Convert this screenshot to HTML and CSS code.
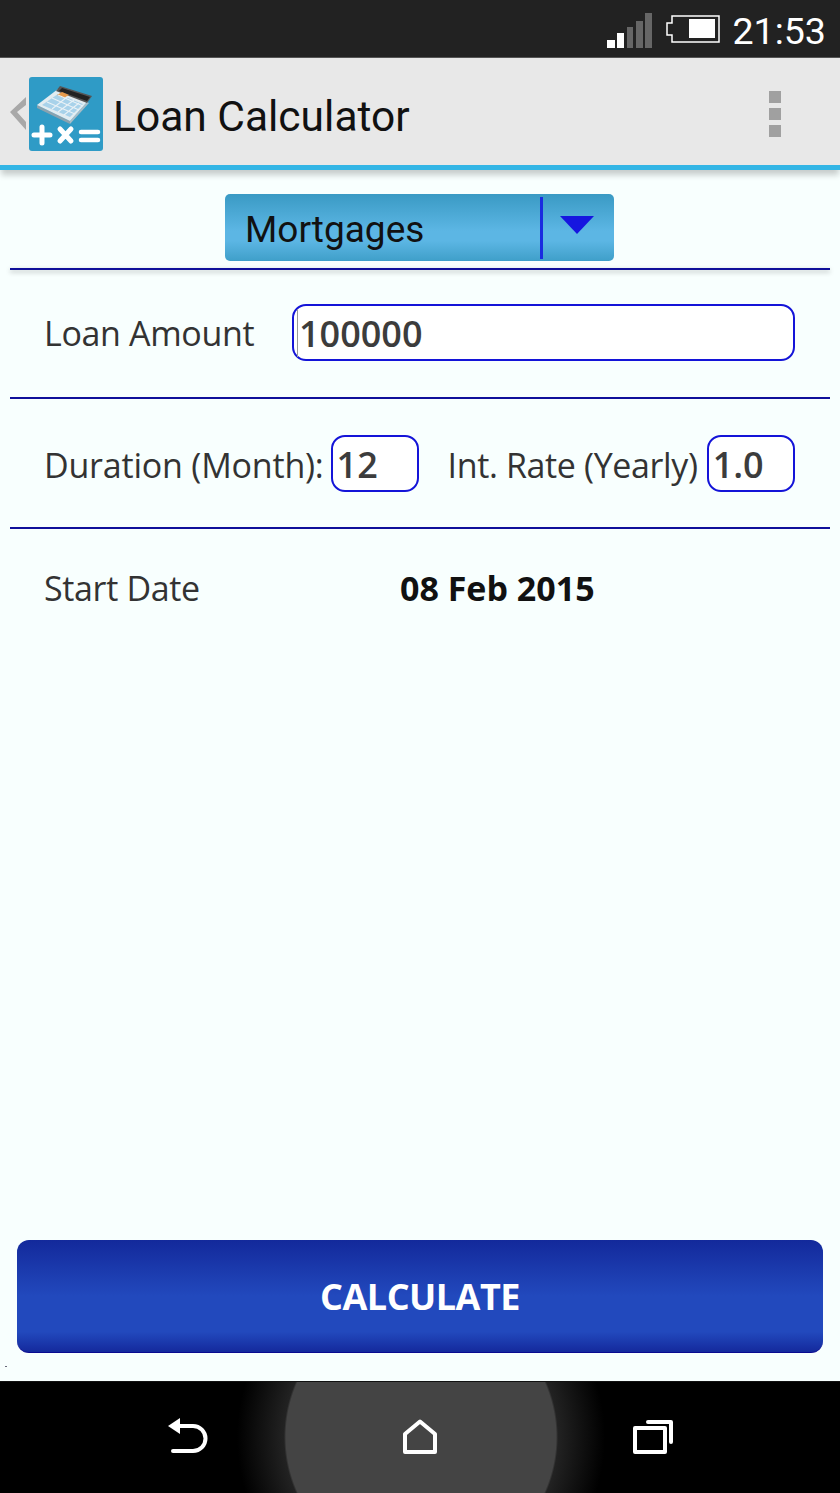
FILE: index.html
```html
<!DOCTYPE html>
<html lang="en">
<head>
  <meta charset="UTF-8">
  <meta name="viewport" content="width=device-width, initial-scale=1.0">
  <link rel="stylesheet" href="styles.css">
  <title>Loan Calculator</title>
</head>
<body>

  <div class="status-bar">
    <svg class="signal" width="46" height="36" viewBox="0 0 46 36">
      <rect x="1" y="28" width="8" height="8" fill="#fff"/>
      <rect x="11" y="21" width="7" height="15" fill="#fff"/>
      <rect x="21" y="15" width="6" height="21" fill="#666"/>
      <rect x="30" y="9" width="7" height="27" fill="#666"/>
      <rect x="39" y="1" width="7" height="35" fill="#666"/>
    </svg>
    <svg class="battery" width="54" height="30" viewBox="0 0 54 30">
      <path d="M6 9V2h47v26H6v-7H1V9z" fill="none" stroke="#fff" stroke-width="1.5"/>
      <rect x="23" y="5" width="26" height="19" fill="#fff"/>
    </svg>
    <span class="clock">21:53</span>
  </div>

  <header class="action-bar">
    <svg class="back" width="16" height="33" viewBox="0 0 16 33">
      <path d="M16 0L0 15 16 33V25L7 15 16 8z" fill="#a8a8a8"/>
    </svg>
    <svg class="app-icon" width="74" height="74" viewBox="0 0 74 74">
      <rect width="74" height="74" rx="3" fill="#2f9bc6"/>
      <path d="M8 28L41 44 41 47 8 31z" fill="#8aa2af"/>
      <path d="M41 44L58 25 60 26 41 47z" fill="#a7bcc7"/>
      <path d="M8 28L29 12 58 25 41 44z" fill="#e2ecf1"/>
      <path d="M31 9L63 19 58 26 27 14z" fill="#555"/>
      <path d="M33 11L61 20 58 24 30 14z" fill="#222"/>
      <path d="M13 28L29 17 54 27 41 40z" fill="#a8d2ea"/>
      <path d="M28 18L33 15 40 18 35 21z" fill="#e69a4c"/>
      <path d="M18 25L46 37M23 21L50 33M29 18L54 29M23 32L38 20M29 35L45 23M35 38L50 26" stroke="#e8f1f6" stroke-width="1.1" fill="none"/>
      <path d="M5 58H21M13 50V66" stroke="#fff" stroke-width="5" stroke-linecap="round" fill="none"/>
      <path d="M31 52L42 64M42 52L31 64" stroke="#fff" stroke-width="5" stroke-linecap="round" fill="none"/>
      <path d="M52 55H69M52 63H69" stroke="#fff" stroke-width="4.5" stroke-linecap="round" fill="none"/>
    </svg>
    <h1 class="title">Loan Calculator</h1>
    <div class="overflow">
      <span></span><span></span><span></span>
    </div>
  </header>

  <main class="content">
    <div class="spinner-row">
      <div class="spinner">
        <span class="spinner-label">Mortgages</span>
        <span class="spinner-arrow"></span>
      </div>
    </div>
    <hr class="divider divider-shadow">

    <div class="row row-amount">
      <label class="field-label amount-label">Loan Amount</label>
      <div class="input input-wide"><span class="caret"></span>100000</div>
    </div>
    <hr class="divider">

    <div class="row row-terms">
      <label class="field-label">Duration (Month):</label>
      <div class="input input-small">12</div>
      <label class="field-label rate-label">Int. Rate (Yearly)</label>
      <div class="input input-small">1.0</div>
    </div>
    <hr class="divider">

    <div class="row row-date">
      <label class="field-label date-label">Start Date</label>
      <strong class="date-value">08 Feb 2015</strong>
    </div>

    <button class="calc-btn">CALCULATE</button>
    <span class="speck"></span>
  </main>

  <nav class="nav-bar">
    <svg width="42" height="40" viewBox="0 0 42 40" fill="none" stroke="#fff" stroke-width="4" stroke-linecap="round">
      <path d="M14 9H27A12.5 12.5 0 0 1 27 34H7"/>
      <path d="M2 9L14 1V17z" fill="#fff" stroke="none"/>
    </svg>
    <svg width="36" height="40" viewBox="0 0 36 40" fill="none" stroke="#fff" stroke-width="4" stroke-linejoin="round">
      <path d="M18 4.5L33 17V35H3V17z"/>
    </svg>
    <svg width="42" height="40" viewBox="0 0 42 40" fill="none" stroke="#fff" stroke-width="4" stroke-linejoin="round" stroke-linecap="round">
      <rect x="3" y="11" width="30" height="24"/>
      <path d="M16 5H39V25"/>
    </svg>
  </nav>

</body>
</html>
```

FILE: styles.css
```css
body {
  font-family: "Open Sans", Arial, sans-serif;
  margin: 0;
  padding: 0;
  width: 840px;
  height: 1493px;
  display: flex;
  flex-direction: column;
  overflow: hidden;
  background: #f8fffe;
}

.status-bar {
  height: 57px;
  flex: none;
  background: #222;
  border-bottom: 1px solid #555;
  display: flex;
  align-items: center;
  justify-content: flex-end;
  padding-right: 14px;
  color: #fff;
}

.signal {
  margin-right: 14px;
  margin-top: 2px;
}

.battery {
  margin-right: 12px;
}

.clock {
  font-family: Roboto, sans-serif;
  font-size: 37.6px;
  margin-top: 5px;
}

.action-bar {
  height: 103px;
  padding-top: 4px;
  flex: none;
  background: #e8e8e8;
  border-bottom: 5px solid #33b5e5;
  box-shadow: 0 6px 6px -1px rgba(0, 0, 0, 0.2);
  display: flex;
  align-items: center;
}

.back {
  flex: none;
  margin: 0 3px 0 10px;
}

.app-icon {
  flex: none;
}

.title {
  font-family: Roboto, sans-serif;
  font-weight: normal;
  font-size: 42.5px;
  color: #111;
  margin: 6px 0 0 10px;
  flex: 1;
}

.overflow {
  display: flex;
  flex-direction: column;
  gap: 5px;
  margin-right: 59px;
}

.overflow span {
  width: 12px;
  height: 12px;
  background: #a0a0a0;
}

.content {
  flex: 1;
  display: flex;
  flex-direction: column;
  padding: 0 10px;
}

.spinner-row {
  display: flex;
  justify-content: center;
  padding-top: 24px;
  height: 98px;
  box-sizing: border-box;
  flex: none;
}

.spinner {
  width: 389px;
  height: 67px;
  box-sizing: border-box;
  border-radius: 5px;
  background: linear-gradient(to bottom, #3a9ac4, #5cb6e4 55%, #5cb6e4 70%, #3f9fc9);
  display: flex;
  align-items: center;
  justify-content: space-between;
  padding-left: 20px;
  margin-left: -1px;
}

.spinner-label {
  font-family: Roboto, sans-serif;
  font-size: 37px;
  color: #111;
  margin-top: 3px;
}

.spinner-arrow {
  width: 74px;
  height: 62px;
  box-sizing: border-box;
  border-left: 3px solid #1a2be0;
  padding-right: 4px;
  display: flex;
  align-items: center;
  justify-content: center;
}

.spinner-arrow::after {
  content: "";
  border-left: 17px solid transparent;
  border-right: 17px solid transparent;
  border-top: 18px solid #1616e0;
  margin-top: -6px;
}

.divider {
  border: none;
  height: 2px;
  margin: 0;
  background: #10109a;
  flex: none;
}

.divider-shadow {
  box-shadow: 0 2px 5px rgba(0, 0, 0, 0.3);
}

.row {
  display: flex;
  align-items: center;
  padding-left: 34px;
  flex: none;
}

.row-amount {
  height: 125px;
  padding-bottom: 2px;
}

.row-terms {
  height: 128px;
}

.row-terms .field-label {
  margin-top: 4px;
}

.row-date {
  height: 118px;
}

.field-label {
  font-size: 34px;
  color: #333;
  letter-spacing: -0.2px;
}

.amount-label {
  width: 248px;
  letter-spacing: -0.35px;
}

.rate-label {
  margin-left: 29px;
  margin-right: 2px;
  letter-spacing: -0.37px;
}

.date-label {
  width: 356px;
  letter-spacing: -0.35px;
}

.input {
  height: 57px;
  box-sizing: border-box;
  border: 2px solid #1414d8;
  border-radius: 14px;
  background: #fff;
  font-size: 36px;
  font-weight: 600;
  color: #3c3c3c;
  padding-left: 4px;
  padding-top: 1px;
  display: flex;
  align-items: center;
}

.caret {
  width: 1px;
  height: 48px;
  background: #999;
  margin: 0 1px 0 -1px;
}

.input-wide {
  width: 503px;
}

.input-small {
  width: 88px;
  margin-left: 7px;
  padding-top: 3px;
}

.date-value {
  font-size: 34px;
  font-weight: 700;
  color: #111;
}

.calc-btn {
  margin: auto 7px 13px;
  height: 113px;
  flex: none;
  border: none;
  border-bottom: 1px solid #0a0a90;
  border-radius: 12px;
  background: linear-gradient(to bottom, #13299b, #2249bd 50%, #2249bd 82%, #14299c);
  color: #fff;
  font-family: "Open Sans", Arial, sans-serif;
  font-size: 36px;
  font-weight: 700;
  letter-spacing: -0.5px;
}

.speck {
  width: 2px;
  height: 1px;
  flex: none;
  margin: 0 0 14px -5px;
  background: #667;
}

.nav-bar {
  height: 112px;
  flex: none;
  box-sizing: border-box;
  background: radial-gradient(circle 184px at 421px 55px, #444 0, #444 135px, #222 137px, #000 100%);
  border-top: 1px solid #111;
  display: flex;
  align-items: center;
  justify-content: center;
  gap: 194px;
  padding-bottom: 1px;
}
```
